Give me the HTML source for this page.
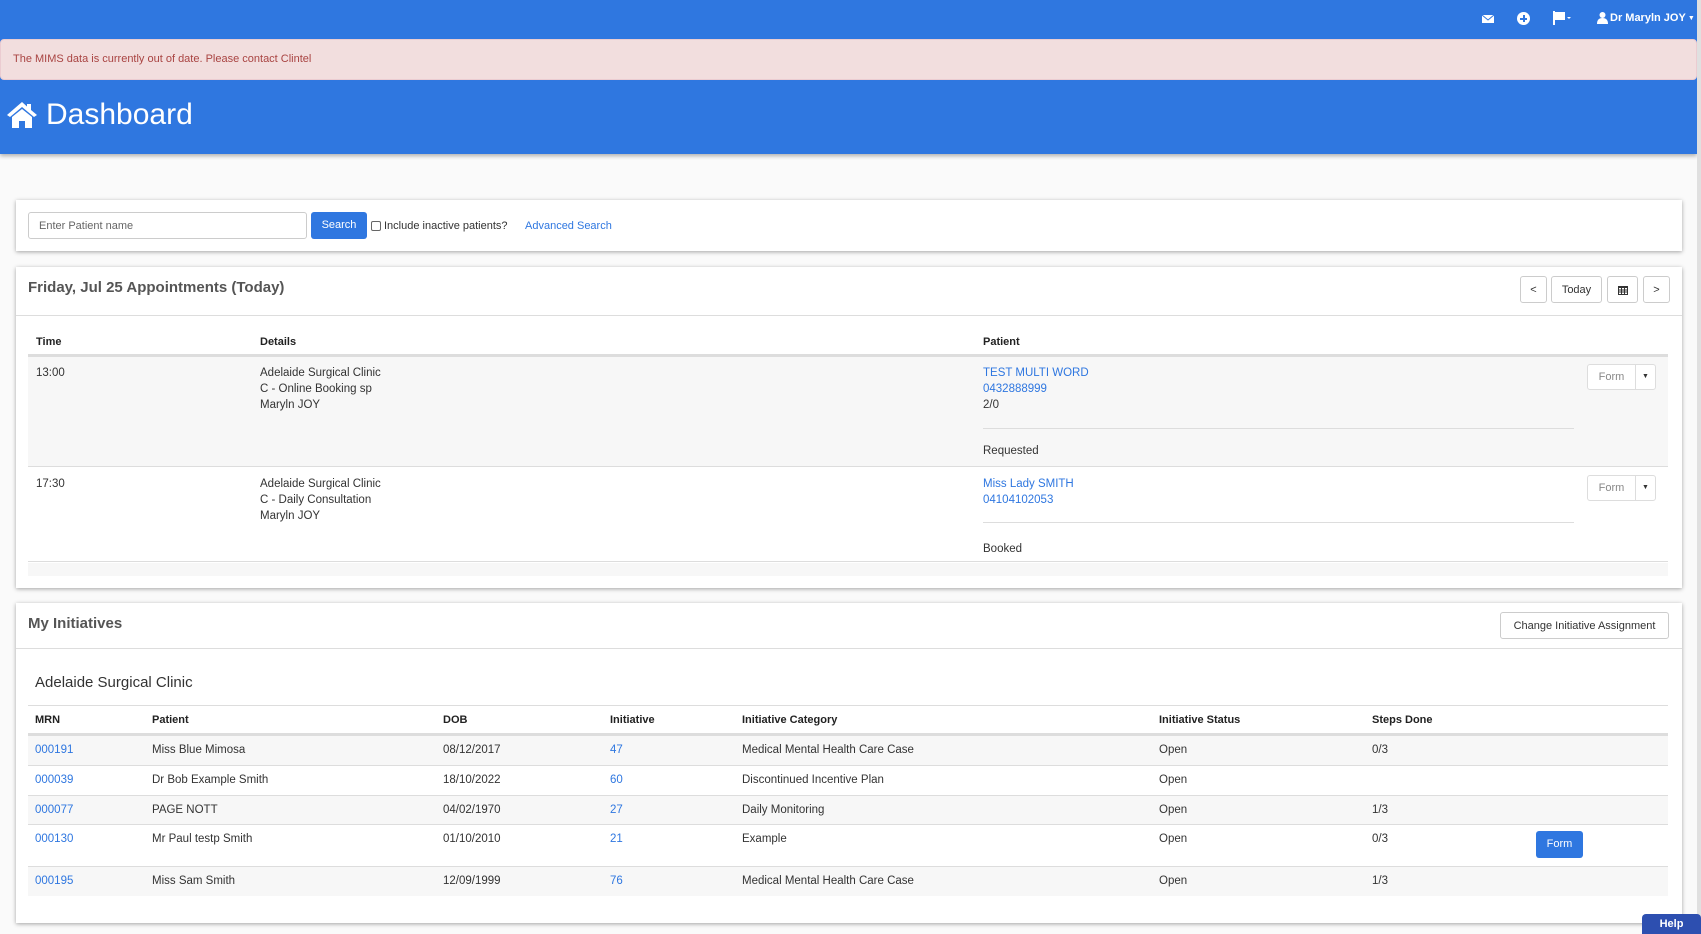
<!DOCTYPE html>
<html><head><meta charset="utf-8"><style>
*{box-sizing:border-box;margin:0;padding:0}
body{width:1701px;height:930px;overflow:hidden;background:#fafafa;font-family:"Liberation Sans",sans-serif;font-size:11.5px;color:#333;position:relative}
.abs{position:absolute}
.hdr{left:0;top:0;width:1697px;height:154px;background:#2f77e0;box-shadow:0 2px 4px rgba(0,0,0,.3)}
.scroll{left:1697px;top:0;width:4px;height:930px;background:#e0e0e0}
.alert{left:0;top:39px;width:1697px;height:41px;background:#f2dede;border:1px solid #ebccd1;border-radius:4px;color:#a94442;font-size:11px;padding:13px 12px}
.nav{color:#fff;font-size:12px;font-weight:bold;white-space:nowrap}
.title{left:6px;top:98px;color:#fff;font-size:30px;display:flex;align-items:center;gap:8px}
.panel{left:16px;width:1666px;background:#fff;box-shadow:0 1px 4px rgba(0,0,0,.35)}
.btn{position:absolute;border:1px solid #ccc;border-radius:3px;background:#fff;font-size:11px;display:flex;align-items:center;justify-content:center;color:#333}
.ph{font-size:15px;font-weight:bold;color:#555}
a{color:#2f77e0;text-decoration:none}
.row{position:absolute;left:12px;width:1640px}
.c{position:absolute;white-space:nowrap}
.th{font-weight:bold;font-size:11px;color:#222}
</style></head><body>
<div class="abs hdr"></div>
<div class="abs scroll"></div>
<div class="abs nav" style="left:1482px;top:13px"><svg width="12" height="10" viewBox="0 0 12 10"><rect x="0" y="1" width="12" height="8" fill="#fff"/><path d="M0 1 L6 6 L12 1" stroke="#2f77e0" fill="none"/></svg></div>
<div class="abs" style="left:1517px;top:12px;width:13px;height:13px;border-radius:50%;background:#fff"><div style="position:absolute;left:3px;top:5.5px;width:7px;height:2px;background:#2f77e0"></div><div style="position:absolute;left:5.5px;top:3px;width:2px;height:7px;background:#2f77e0"></div></div>
<div class="abs nav" style="left:1553px;top:11px"><svg width="20" height="14" viewBox="0 0 20 14"><rect x="0" y="0" width="2" height="14" fill="#fff"/><path d="M2 1 H12 V9 H2Z" fill="#fff"/><path d="M14 6 L18 6 L16 8Z" fill="#fff"/></svg></div>
<div class="abs nav" style="left:1597px;top:12px;display:flex;align-items:center;gap:2px;font-size:11px"><svg width="11" height="12" viewBox="0 0 11 12"><circle cx="5.5" cy="3" r="3" fill="#fff"/><path d="M0 12 Q0 6 5.5 6 Q11 6 11 12Z" fill="#fff"/></svg>Dr Maryln JOY<span style="font-size:7px">▼</span></div>
<div class="abs alert">The MIMS data is currently out of date. Please contact Clintel</div>
<div class="abs title"><svg width="32" height="28" viewBox="0 0 32 28"><path d="M16 1 L1 14 L4 16 L16 6 L28 16 L31 14 L25 9 V3 H21 V5.5Z" fill="#fff"/><path d="M6 16 L16 8 L26 16 V27 H19 V20 H13 V27 H6Z" fill="#fff"/></svg>Dashboard</div>

<div class="abs panel" style="top:200px;height:51px">
<div class="abs" style="left:12px;top:12px;width:279px;height:27px;border:1px solid #ccc;border-radius:3px;font-size:11px;color:#666;padding:7px 10px">Enter Patient name</div>
<div class="abs" style="left:295px;top:12px;width:56px;height:27px;background:#2f77e0;color:#fff;border-radius:3px;font-size:11px;text-align:center;line-height:27px">Search</div>
<div class="abs" style="left:355px;top:21px;width:10px;height:10px;border:1px solid #666;border-radius:2px"></div>
<div class="abs" style="left:368px;top:20px;font-size:11px">Include inactive patients?</div>
<div class="abs" style="left:509px;top:20px;font-size:11px"><a>Advanced Search</a></div>
</div>

<div class="abs panel" style="top:267px;height:321px">
<div class="abs ph" style="left:12px;top:12px">Friday, Jul 25 Appointments (Today)</div>
<div class="btn" style="left:1504px;top:9px;width:27px;height:27px">&lt;</div>
<div class="btn" style="left:1535px;top:9px;width:51px;height:27px">Today</div>
<div class="btn" style="left:1591px;top:9px;width:31px;height:27px"><svg width="10" height="10" viewBox="0 0 10 10"><rect x="0" y="1" width="10" height="9" fill="#333"/><rect x="1" y="3" width="8" height="6" fill="#fff"/><path d="M1 5H9M1 7H9M3.5 3V9M6.5 3V9" stroke="#333"/></svg></div>
<div class="btn" style="left:1627px;top:9px;width:27px;height:27px">&gt;</div>
<div class="abs" style="left:0;top:48px;width:1666px;border-top:1px solid #ddd"></div>
<div class="row th" style="top:69px"><span class="c" style="left:8px">Time</span><span class="c" style="left:232px">Details</span><span class="c" style="left:955px">Patient</span></div>
<div class="row" style="top:87px;height:3px;background:#ddd"></div>
<div class="row" style="top:90px;height:110px;background:#f7f7f7;border-bottom:1px solid #ddd;line-height:16px">
<span class="c" style="left:8px;top:8px">13:00</span>
<span class="c" style="left:232px;top:8px">Adelaide Surgical Clinic<br>C - Online Booking sp<br>Maryln JOY</span>
<span class="c" style="left:955px;top:8px"><a>TEST MULTI WORD</a><br><a>0432888999</a><br>2/0</span>
<div class="c" style="left:955px;top:71px;width:591px;border-top:1px solid #ddd"></div>
<span class="c" style="left:955px;top:86px">Requested</span>
<div class="btn" style="left:1559px;top:7px;width:49px;height:26px;color:#888;border-color:#ddd;border-radius:3px 0 0 3px">Form</div>
<div class="btn" style="left:1607px;top:7px;width:21px;height:26px;border-color:#ddd;border-radius:0 3px 3px 0;font-size:7px">▼</div>
</div>
<div class="row" style="top:201px;height:94px;border-bottom:1px solid #ddd;line-height:16px">
<span class="c" style="left:8px;top:8px">17:30</span>
<span class="c" style="left:232px;top:8px">Adelaide Surgical Clinic<br>C - Daily Consultation<br>Maryln JOY</span>
<span class="c" style="left:955px;top:8px"><a>Miss Lady SMITH</a><br><a>04104102053</a></span>
<div class="c" style="left:955px;top:54px;width:591px;border-top:1px solid #ddd"></div>
<span class="c" style="left:955px;top:73px">Booked</span>
<div class="btn" style="left:1559px;top:7px;width:49px;height:26px;color:#888;border-color:#ddd;border-radius:3px 0 0 3px">Form</div>
<div class="btn" style="left:1607px;top:7px;width:21px;height:26px;border-color:#ddd;border-radius:0 3px 3px 0;font-size:7px">▼</div>
</div>
<div class="row" style="top:296px;height:13px;background:#f7f7f7"></div>
</div>

<div class="abs panel" style="top:603px;height:320px">
<div class="abs ph" style="left:12px;top:12px">My Initiatives</div>
<div class="btn" style="left:1484px;top:9px;width:169px;height:27px">Change Initiative Assignment</div>
<div class="abs" style="left:0;top:45px;width:1666px;border-top:1px solid #ddd"></div>
<div class="abs" style="left:19px;top:71px;font-size:15px;color:#333">Adelaide Surgical Clinic</div>
<div class="row" style="top:102px;border-top:1px solid #ddd"></div>
<div class="row th" style="top:111px"><span class="c" style="left:7px">MRN</span><span class="c" style="left:124px">Patient</span><span class="c" style="left:415px">DOB</span><span class="c" style="left:582px">Initiative</span><span class="c" style="left:714px">Initiative Category</span><span class="c" style="left:1131px">Initiative Status</span><span class="c" style="left:1344px">Steps Done</span></div>
<div class="row" style="top:130px;height:3px;background:#ddd"></div>
<div class="row" style="top:133px;height:30px;background:#f7f7f7;border-bottom:1px solid #ddd"><span class="c" style="left:7px;top:8px"><a>000191</a></span><span class="c" style="left:124px;top:8px">Miss Blue Mimosa</span><span class="c" style="left:415px;top:8px">08/12/2017</span><span class="c" style="left:582px;top:8px"><a>47</a></span><span class="c" style="left:714px;top:8px">Medical Mental Health Care Case</span><span class="c" style="left:1131px;top:8px">Open</span><span class="c" style="left:1344px;top:8px">0/3</span></div>
<div class="row" style="top:163px;height:30px;border-bottom:1px solid #ddd"><span class="c" style="left:7px;top:8px"><a>000039</a></span><span class="c" style="left:124px;top:8px">Dr Bob Example Smith</span><span class="c" style="left:415px;top:8px">18/10/2022</span><span class="c" style="left:582px;top:8px"><a>60</a></span><span class="c" style="left:714px;top:8px">Discontinued Incentive Plan</span><span class="c" style="left:1131px;top:8px">Open</span></div>
<div class="row" style="top:193px;height:29px;background:#f7f7f7;border-bottom:1px solid #ddd"><span class="c" style="left:7px;top:8px"><a>000077</a></span><span class="c" style="left:124px;top:8px">PAGE NOTT</span><span class="c" style="left:415px;top:8px">04/02/1970</span><span class="c" style="left:582px;top:8px"><a>27</a></span><span class="c" style="left:714px;top:8px">Daily Monitoring</span><span class="c" style="left:1131px;top:8px">Open</span><span class="c" style="left:1344px;top:8px">1/3</span></div>
<div class="row" style="top:222px;height:42px;border-bottom:1px solid #ddd"><span class="c" style="left:7px;top:8px"><a>000130</a></span><span class="c" style="left:124px;top:8px">Mr Paul testp Smith</span><span class="c" style="left:415px;top:8px">01/10/2010</span><span class="c" style="left:582px;top:8px"><a>21</a></span><span class="c" style="left:714px;top:8px">Example</span><span class="c" style="left:1131px;top:8px">Open</span><span class="c" style="left:1344px;top:8px">0/3</span><div class="c" style="left:1508px;top:6px;width:47px;height:27px;background:#2f77e0;color:#fff;border-radius:3px;text-align:center;line-height:27px;font-size:11px">Form</div></div>
<div class="row" style="top:264px;height:29px;background:#f7f7f7"><span class="c" style="left:7px;top:8px"><a>000195</a></span><span class="c" style="left:124px;top:8px">Miss Sam Smith</span><span class="c" style="left:415px;top:8px">12/09/1999</span><span class="c" style="left:582px;top:8px"><a>76</a></span><span class="c" style="left:714px;top:8px">Medical Mental Health Care Case</span><span class="c" style="left:1131px;top:8px">Open</span><span class="c" style="left:1344px;top:8px">1/3</span></div>
</div>
<div class="abs" style="left:1642px;top:914px;width:59px;height:20px;background:#2d4fb0;color:#fff;border-radius:4px 4px 0 0;font-size:11px;font-weight:bold;text-align:center;padding-top:4px">Help</div>
</body></html>
